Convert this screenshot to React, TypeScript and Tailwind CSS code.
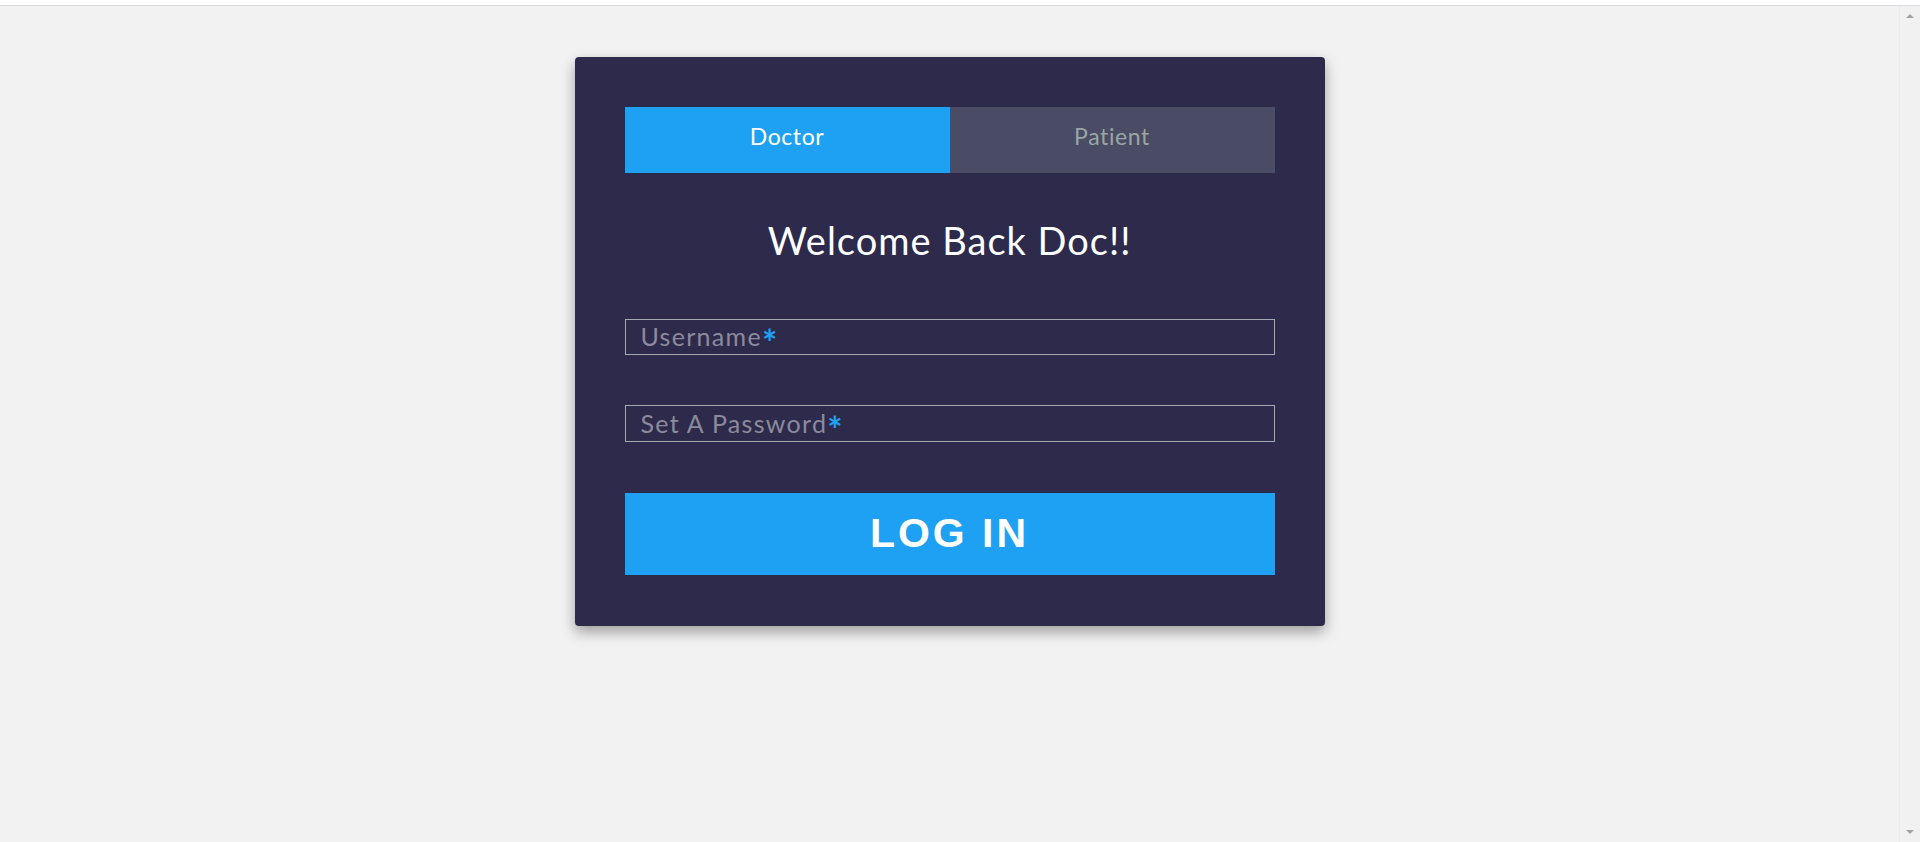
import { useState } from 'react';

const sans = "font-['Lato','Noto_Sans',sans-serif]";

export default function App() {
  const [role, setRole] = useState<'doctor' | 'patient'>('doctor');

  return (
    <div className="h-screen flex flex-col bg-[#f2f2f2] overflow-hidden">
      <div className="h-[5px] bg-white border-b border-[#dcd9e0] box-content" />
      <div className="flex flex-1 min-h-0">
        <main className="flex-1 flex justify-center">
          <div className="w-[750px] h-fit mt-[51px] bg-[#2d2a4b] rounded-[4px] px-[50px] pt-[50px] pb-[51px] shadow-[0_6px_14px_rgba(0,0,0,0.35)]">
            <div className={`flex h-[66px] text-[23px] tracking-[0.6px] ${sans}`}>
              <button
                onClick={() => setRole('doctor')}
                className={`flex-1 pb-[7px] ${role === 'doctor' ? 'bg-[#1ea1f2] text-white' : 'bg-[#4a4b64] text-[#9aa6a5]'}`}
              >
                Doctor
              </button>
              <button
                onClick={() => setRole('patient')}
                className={`flex-1 pb-[7px] ${role === 'patient' ? 'bg-[#1ea1f2] text-white' : 'bg-[#4a4b64] text-[#9aa6a5]'}`}
              >
                Patient
              </button>
            </div>

            <h1 className={`mt-[46px] text-center text-white text-[38px] leading-[43px] tracking-[1px] ${sans}`}>
              Welcome Back Doc!!
            </h1>

            <div className={`mt-[57px] h-[36px] border border-[#a3abb1] flex items-center pl-[15px] text-[25px] tracking-[1.3px] text-[#8c8a9c] ${sans}`}>
              Username<span className="text-[#1ea1f2] text-[36px] leading-none mt-[10px] font-bold">*</span>
            </div>

            <div className={`mt-[50px] h-[37px] border border-[#a3abb1] flex items-center pl-[15px] text-[25px] tracking-[1.3px] text-[#8c8a9c] ${sans}`}>
              Set A Password<span className="text-[#1ea1f2] text-[36px] leading-none mt-[10px] font-bold">*</span>
            </div>

            <button className="mt-[51px] w-full h-[82px] bg-[#1ea1f2] text-white font-bold text-[41px] tracking-[3px] font-['Liberation_Sans',Arial,sans-serif]">
              LOG IN
            </button>
          </div>
        </main>

        <div className="w-[21px] bg-[#f1f1f1] border-l border-[#ececec] flex flex-col items-center justify-between py-[8px]">
          <div className="w-0 h-0 border-l-[4px] border-r-[4px] border-b-[4px] border-l-transparent border-r-transparent border-b-[#a3a3a3]" />
          <div className="w-0 h-0 border-l-[4px] border-r-[4px] border-t-[4px] border-l-transparent border-r-transparent border-t-[#a3a3a3]" />
        </div>
      </div>
    </div>
  );
}
